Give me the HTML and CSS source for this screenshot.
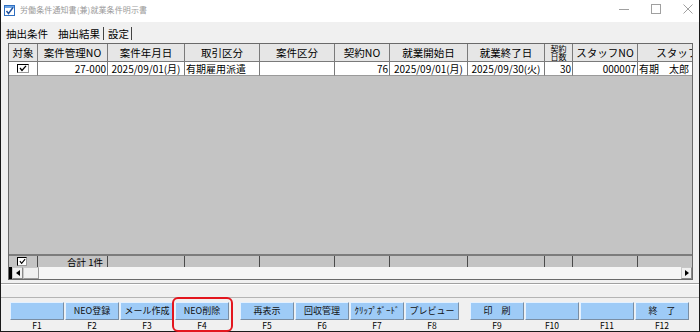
FILE: index.html
```html
<!DOCTYPE html>
<html lang="ja">
<head>
<meta charset="utf-8">
<title>労働条件通知書(兼)就業条件明示書</title>
<link rel="stylesheet" href="styles.css">
</head>
<body>
<div class="window">
  <div class="titlebar">
    <svg class="appicon" width="11" height="11" viewBox="0 0 11 11">
      <rect x="0.5" y="0.5" width="10" height="10" fill="#fff" stroke="#2f6fc0"/>
      <rect x="1" y="1" width="9" height="2" fill="#6fa6e6"/>
      <path d="M2.5 6 L4.5 8.5 L9 2.5" fill="none" stroke="#1f4f9a" stroke-width="1.4"/>
    </svg>
    <span class="title">労働条件通知書(兼)就業条件明示書</span>
    <div class="controls">
      <svg width="12" height="12" viewBox="0 0 12 12"><path d="M1 6.5 H11" stroke="#a0a0a0" stroke-width="1"/></svg>
      <svg width="12" height="12" viewBox="0 0 12 12"><rect x="1.5" y="1.5" width="9" height="9" fill="none" stroke="#a0a0a0"/></svg>
      <svg width="12" height="12" viewBox="0 0 12 12"><path d="M1.5 1.5 L10.5 10.5 M10.5 1.5 L1.5 10.5" stroke="#a0a0a0" stroke-width="1"/></svg>
    </div>
  </div>

  <div class="tabs">
    <span class="tab first">抽出条件</span>
    <span class="tab active">抽出結果</span>
    <span class="tab last">設定</span>
  </div>

  <div class="grid">
    <div class="row head">
      <div class="cell">対象</div>
      <div class="cell">案件管理NO</div>
      <div class="cell">案件年月日</div>
      <div class="cell">取引区分</div>
      <div class="cell">案件区分</div>
      <div class="cell">契約NO</div>
      <div class="cell">就業開始日</div>
      <div class="cell">就業終了日</div>
      <div class="cell two"><span>契約</span><span>日数</span></div>
      <div class="cell">スタッフNO</div>
      <div class="cell">スタッフ名</div>
    </div>
    <div class="row data">
      <div class="cell chk"><span class="box"><svg width="8" height="7" viewBox="0 0 8 7"><path d="M1 3 L3 5.5 L7 0.8" fill="none" stroke="#000" stroke-width="1.3"/></svg></span></div>
      <div class="cell r">27-000</div>
      <div class="cell">2025/09/01(月)</div>
      <div class="cell l">有期雇用派遣</div>
      <div class="cell"></div>
      <div class="cell r">76</div>
      <div class="cell">2025/09/01(月)</div>
      <div class="cell">2025/09/30(火)</div>
      <div class="cell r">30</div>
      <div class="cell r">000007</div>
      <div class="cell l">有期　太郎</div>
    </div>
    <div class="empty"></div>
    <div class="row total">
      <div class="cell chk"><span class="box small"><svg width="8" height="7" viewBox="0 0 8 7"><path d="M1 3 L3 5.5 L7 0.8" fill="none" stroke="#000" stroke-width="1.3"/></svg></span></div>
      <div class="cell r">合計 1件</div>
      <div class="cell"></div>
      <div class="cell"></div>
      <div class="cell"></div>
      <div class="cell"></div>
      <div class="cell"></div>
      <div class="cell"></div>
      <div class="cell"></div>
      <div class="cell"></div>
      <div class="cell"></div>
    </div>
    <div class="hscroll">
      <span class="sb-edge"></span>
      <span class="sb-btn"><svg width="4" height="6" viewBox="0 0 4 6"><path d="M4 0 V6 L0 3 Z" fill="#000"/></svg></span>
      <span class="sb-thumb"></span>
      <span class="sb-track"></span>
      <span class="sb-btn"><svg width="4" height="6" viewBox="0 0 4 6"><path d="M0 0 V6 L4 3 Z" fill="#000"/></svg></span>
    </div>
  </div>

  <div class="sep"></div>

  <div class="fkeys">
    <div class="group">
      <div class="key"><div class="btn"></div><div class="lbl">F1</div></div>
      <div class="key"><div class="btn">NEO登録</div><div class="lbl">F2</div></div>
      <div class="key"><div class="btn">メール作成</div><div class="lbl">F3</div></div>
      <div class="key"><div class="btn">NEO削除</div><div class="lbl">F4</div></div>
    </div>
    <div class="group">
      <div class="key"><div class="btn">再表示</div><div class="lbl">F5</div></div>
      <div class="key"><div class="btn">回収管理</div><div class="lbl">F6</div></div>
      <div class="key"><div class="btn">ｸﾘｯﾌﾟﾎﾞｰﾄﾞ</div><div class="lbl">F7</div></div>
      <div class="key"><div class="btn">プレビュー</div><div class="lbl">F8</div></div>
    </div>
    <div class="group">
      <div class="key"><div class="btn">印　刷</div><div class="lbl">F9</div></div>
      <div class="key"><div class="btn"></div><div class="lbl">F10</div></div>
      <div class="key"><div class="btn"></div><div class="lbl">F11</div></div>
      <div class="key"><div class="btn">終　了</div><div class="lbl">F12</div></div>
    </div>
    <div class="highlight"></div>
  </div>
</div>
</body>
</html>
```

FILE: styles.css
```css
* { box-sizing: border-box; }
html, body { margin: 0; padding: 0; }
body {
  width: 700px;
  height: 332px;
  overflow: hidden;
  background: #f0f0f0;
  font-family: "Noto Sans CJK JP", "Noto Sans", sans-serif;
  color: #000;
}
.window {
  width: 700px;
  height: 332px;
  border-left: 1px solid #1a1a1a;
  border-right: 1px solid #1a1a1a;
  border-bottom: 1px solid #1a1a1a;
  background: #f0f0f0;
  position: relative;
}

/* title bar */
.titlebar {
  height: 22px;
  background: #fff;
  display: flex;
  align-items: center;
}
.appicon { margin-left: 3px; margin-top: -2px; flex: none; }
.title {
  margin-left: 5px;
  font-size: 8px;
  line-height: 10px;
  color: #9a9a9a;
  margin-top: -2px;
  letter-spacing: 0.1px;
}
.controls {
  margin-left: auto;
  margin-right: 5px;
  display: flex;
  gap: 20px;
  margin-top: -4px;
}
.controls svg { display: block; }

/* tabs */
.tabs {
  height: 21px;
  display: flex;
  align-items: center;
  padding-left: 5px;
  padding-top: 2px;
}
.tab {
  font-size: 10.5px;
  line-height: 13px;
  height: 13px;
}
.tab.first { margin-right: 10px; }
.tab.active { padding-right: 3px; border-right: 1px solid #444; }
.tab.last { padding-left: 4px; padding-right: 2px; border-right: 1px solid #444; }

/* grid */
.grid {
  margin-left: 7px;
  width: 685px;
  height: 237px;
  border: 1px solid #6a6a6a;
  overflow: hidden;
  background: #c4c4c4;
  display: flex;
  flex-direction: column;
}
.row {
  display: grid;
  grid-template-columns: 29px 70px 77px 75px 75px 55px 78px 77px 28px 65px 90px;
  width: max-content;
  flex: none;
}
.cell {
  border-right: 1px solid #7a7a7a;
  display: flex;
  align-items: center;
  justify-content: center;
  white-space: nowrap;
  overflow: hidden;
}
.head { height: 18px; background: #e6e6e6; }
.head .cell {
  font-size: 10.5px;
  line-height: 12px;
  border-bottom: 1px solid #7a7a7a;
}
.head .cell.two {
  flex-direction: column;
  font-size: 8px;
  line-height: 8px;
}
.data { height: 14px; background: #fff; }
.data .cell {
  font-size: 10px;
  line-height: 12px;
  border-bottom: 1px solid #9a9a9a;
  padding: 0 1px;
}
.cell.r { justify-content: flex-end; }
.cell.l { justify-content: flex-start; }
.cell.chk { justify-content: flex-start; padding-left: 8px; }
.box {
  width: 12px;
  height: 9px;
  background: #fff;
  border-top: 1px solid #000;
  border-left: 1px solid #000;
  border-right: 1px solid #9a9a9a;
  border-bottom: 1px solid #9a9a9a;
  display: flex;
  align-items: center;
  padding-left: 1px;
}
.box svg { display: block; }
.box.small { width: 10px; height: 9px; }
.empty { flex: 1; }
.total {
  height: 13px;
  background: #c4c4c4;
  border-top: 2px solid #7c7c7c;
}
.total .cell {
  font-size: 9.5px;
  line-height: 10px;
  border-right: 1px solid #4a4a4a;
  padding-right: 4px;
}
.hscroll {
  height: 12px;
  flex: none;
  display: flex;
  background: #f6f6f6;
}
.sb-edge { width: 3px; background: #000; }
.sb-btn {
  width: 11px;
  border: 1px solid #c8c8c8;
  border-right-color: #8a8a8a;
  border-bottom-color: #8a8a8a;
  display: flex;
  align-items: center;
  justify-content: center;
  background: #f0f0f0;
}
.sb-btn:first-of-type { width: 14px; }
.sb-thumb {
  width: 16px;
  border: 1px solid #c8c8c8;
  border-right-color: #9a9a9a;
  border-bottom-color: #9a9a9a;
  background: #f0f0f0;
}
.sb-track { flex: 1; }

/* separator */
.sep {
  margin-top: 3px;
  height: 2px;
  border-top: 1px solid #a0a0a0;
  border-bottom: 1px solid #ffffff;
}

/* function keys */
.fkeys {
  margin-top: 12px;
  border-top: 1px solid #b4b4b4;
  padding-top: 4px;
  padding-left: 9px;
  display: flex;
  gap: 11px;
  position: relative;
}
.group { display: flex; gap: 1px; }
.key { width: 54px; }
.btn {
  height: 18px;
  background: #9ecbf7;
  border-top: 1px solid #e4f1ff;
  border-left: 1px solid #e4f1ff;
  border-right: 1px solid #7a8ea4;
  border-bottom: 1px solid #7a8ea4;
  font-size: 9px;
  line-height: 16px;
  text-align: center;
  white-space: nowrap;
  color: #111;
}
.lbl {
  height: 11px;
  font-size: 8.5px;
  line-height: 11px;
  text-align: center;
}
.highlight {
  position: absolute;
  left: 171px;
  top: -1px;
  width: 61px;
  height: 35px;
  border: 2px solid #e3161e;
  border-radius: 6px;
  pointer-events: none;
}
```
